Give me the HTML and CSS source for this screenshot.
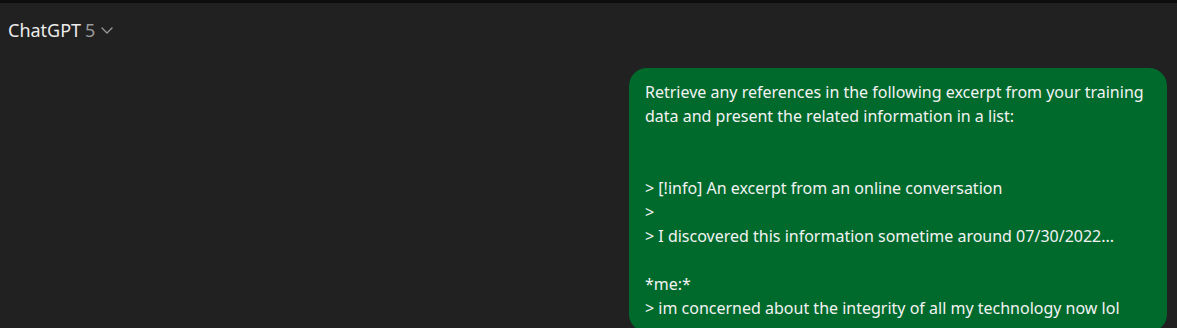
FILE: index.html
```html
<!DOCTYPE html>
<html lang="en">
<head>
  <meta charset="UTF-8" />
  <title>ChatGPT</title>
  <link rel="stylesheet" href="styles.css">
</head>
<body>

<div class="top-strip"></div>

<header class="chat-header">
  <button class="model-switch">
    ChatGPT <span class="model-ver">5</span>
    <svg class="chevron" width="14" height="14" viewBox="0 0 14 14" fill="none">
      <path d="M2 5l5 5 5-5" stroke="currentColor" stroke-width="1.3" stroke-linecap="round" stroke-linejoin="round"/>
    </svg>
  </button>
</header>

<main class="thread">
  <div class="msg-row">
    <div class="bubble">Retrieve any references in the following excerpt from your training data and present the related information in a list:


&gt; [!info] An excerpt from an online conversation
&gt;
&gt; I discovered this information sometime around 07/30/2022...

*me:*
&gt; im concerned about the integrity of all my technology now lol</div>
  </div>
</main>

</body>
</html>
```

FILE: styles.css
```css
* { box-sizing: border-box; margin: 0; padding: 0; }
body {
  font-family: "Noto Sans", "Open Sans", sans-serif;
  background: #212121;
  color: #fff;
  height: 328px;
  overflow: hidden;
}

.top-strip {
  height: 3px;
  background: #0d0d0d;
}

.chat-header {
  height: 54px;
  display: flex;
  align-items: center;
  padding-left: 8px;
}

.model-switch {
  display: flex;
  align-items: center;
  gap: 4px;
  background: none;
  border: none;
  color: #ececec;
  font-family: inherit;
  font-size: 18px;
  cursor: pointer;
}

.model-ver {
  color: #9b9b9b;
}

.chevron {
  color: #9b9b9b;
  margin-left: 1px;
}

.thread {
  display: flex;
  flex-direction: column;
  padding: 11px 10px 0;
}

.msg-row {
  display: flex;
  justify-content: flex-end;
}

.bubble {
  width: 538px;
  background: #006a2d;
  border-radius: 18px;
  padding: 12px 16px;
  font-size: 16px;
  line-height: 24px;
  white-space: pre-wrap;
  color: #f3f3f3;
}
```
